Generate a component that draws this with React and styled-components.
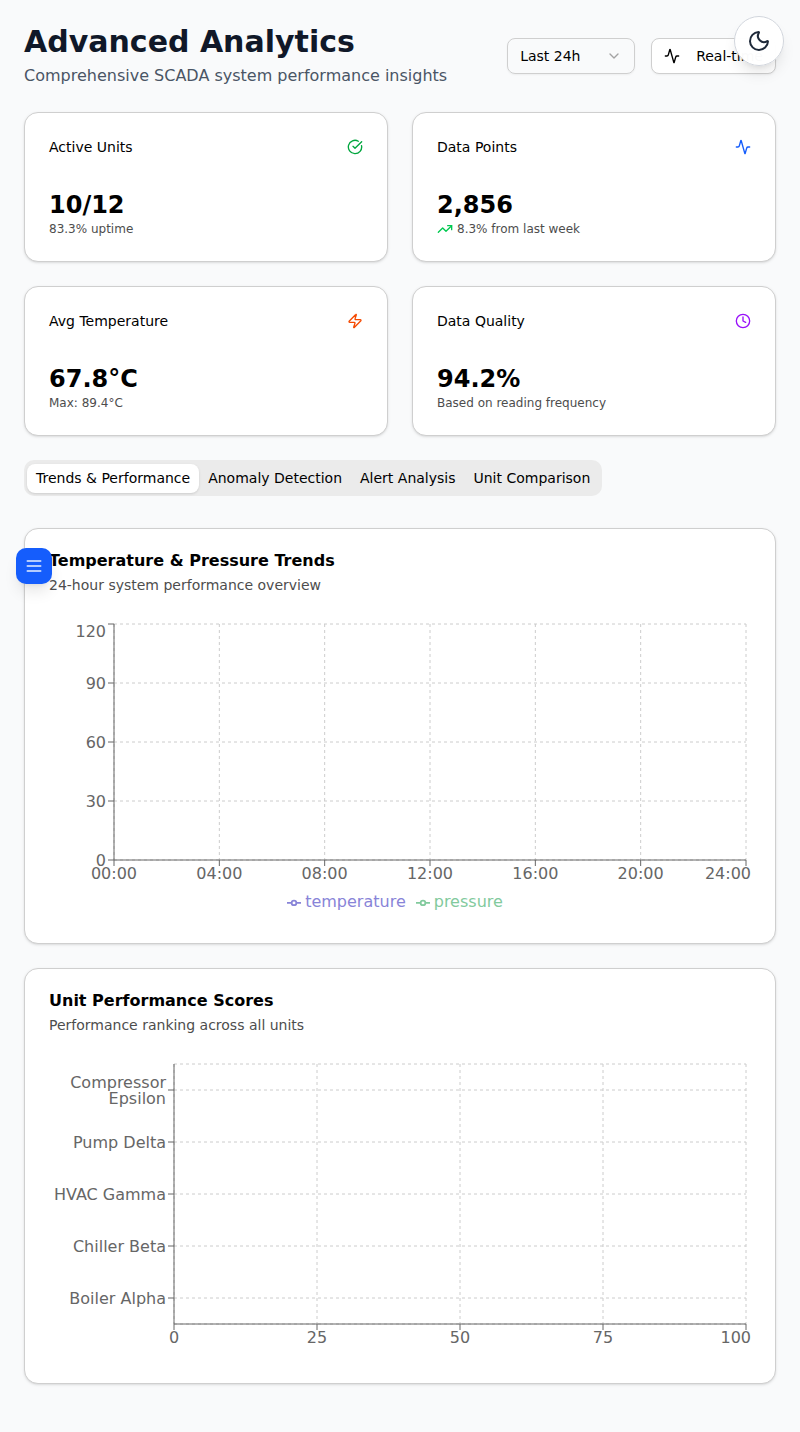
import React, { useLayoutEffect, useRef, useState } from "react";
import styled, { createGlobalStyle } from "styled-components";
import {
  Activity,
  ChevronDown,
  CircleCheckBig,
  Clock,
  Moon,
  TrendingUp,
  Zap,
} from "lucide-react";

const GlobalStyle = createGlobalStyle`
  *, *::before, *::after { box-sizing: border-box; }
  body {
    margin: 0;
    background: #f9fafb;
    color: #000;
    font-family: "DejaVu Sans", sans-serif;
    font-size: 16px;
    line-height: 24px;
  }
  h1, h2, p { margin: 0; }
  button, select { font: inherit; color: inherit; }
  svg { display: block; flex-shrink: 0; }
`;

const Page = styled.main`
  min-height: 100vh;
  padding: 24px 24px 48px;
  display: flex;
  flex-direction: column;
  gap: 24px;
`;

const Header = styled.header`
  display: flex;
  align-items: center;
  justify-content: space-between;
  gap: 16px;
`;

const Heading = styled.div`
  display: flex;
  flex-direction: column;
  gap: 4px;
`;

const Title = styled.h1`
  font-size: 30px;
  line-height: 36px;
  font-weight: 700;
  color: #101828;
`;

const Subtitle = styled.p`
  color: #4a5565;
`;

const Controls = styled.div`
  display: flex;
  gap: 16px;
`;

const SelectBox = styled.div`
  display: grid;
  align-items: center;
  width: 128px;

  & > * { grid-area: 1 / 1; }
  & > svg {
    justify-self: end;
    margin-right: 13px;
    color: #a3a3a3;
    pointer-events: none;
  }
`;

const Select = styled.select`
  appearance: none;
  width: 100%;
  height: 36px;
  padding: 0 32px 0 12px;
  border: 1px solid #cfcfcf;
  border-radius: 8px;
  background: transparent;
  font-size: 14px;
  line-height: 20px;
  box-shadow: 0 1px 2px rgba(0, 0, 0, 0.05);
`;

const OutlineButton = styled.button`
  display: flex;
  align-items: center;
  gap: 16px;
  height: 36px;
  padding: 0 12px;
  border: 1px solid #cfcfcf;
  border-radius: 8px;
  background: #fff;
  font-size: 14px;
  line-height: 20px;
  white-space: nowrap;
  box-shadow: 0 1px 2px rgba(0, 0, 0, 0.05);
`;

const ThemeToggle = styled.button`
  position: fixed;
  top: 16px;
  right: 16px;
  z-index: 2;
  display: grid;
  place-items: center;
  width: 50px;
  height: 50px;
  padding: 0;
  border: 1px solid #d1d5dc;
  border-radius: 50%;
  background: rgba(255, 255, 255, 0.98);
  color: #1e2939;
  box-shadow: 0 10px 15px -3px rgba(0, 0, 0, 0.1), 0 4px 6px -4px rgba(0, 0, 0, 0.1);
`;

const MenuButton = styled.button`
  position: fixed;
  top: 548px;
  left: 16px;
  z-index: 2;
  display: grid;
  place-items: center;
  width: 36px;
  height: 36px;
  padding: 0;
  border: 0;
  border-radius: 10px;
  background: #155dfc;
  color: rgba(255, 255, 255, 0.9);
  box-shadow: 0 10px 15px -3px rgba(0, 0, 0, 0.1), 0 4px 6px -4px rgba(0, 0, 0, 0.1);
`;

const StatGrid = styled.section`
  display: grid;
  grid-template-columns: repeat(2, minmax(0, 1fr));
  gap: 24px;
`;

const Card = styled.article`
  padding: 24px;
  border: 1px solid #cfcfcf;
  border-radius: 14px;
  background: #fff;
  box-shadow: 0 1px 3px rgba(0, 0, 0, 0.1), 0 1px 2px -1px rgba(0, 0, 0, 0.1);
`;

const StatHeader = styled.div`
  display: flex;
  align-items: center;
  justify-content: space-between;
  margin-bottom: 32px;
  color: ${(p) => p.$accent};
`;

const StatLabel = styled.h2`
  font-size: 14px;
  line-height: 20px;
  font-weight: 400;
  color: #000;
`;

const StatValue = styled.p`
  font-size: 24px;
  line-height: 32px;
  font-weight: 700;
`;

const StatNote = styled.p`
  display: flex;
  align-items: center;
  gap: 4px;
  font-size: 12px;
  line-height: 16px;
  color: #4d4d4d;

  & > svg { color: #00c950; }
`;

const TabList = styled.div`
  display: flex;
  align-items: center;
  align-self: flex-start;
  height: 36px;
  margin-bottom: 8px;
  padding: 3px;
  border-radius: 10px;
  background: #ebebeb;
`;

const Tab = styled.button`
  height: 29px;
  padding: 0 9px;
  border: 0;
  border-radius: 8px;
  background: ${(p) => (p.$active ? "#fff" : "transparent")};
  box-shadow: ${(p) => (p.$active ? "0 1px 3px rgba(0, 0, 0, 0.1), 0 1px 2px -1px rgba(0, 0, 0, 0.1)" : "none")};
  font-size: 14px;
  line-height: 20px;
  white-space: nowrap;
`;

const ChartTitle = styled.h2`
  margin-bottom: 6px;
  font-size: 16px;
  line-height: 16px;
  font-weight: 700;
`;

const ChartNote = styled.p`
  margin-bottom: 24px;
  font-size: 14px;
  line-height: 20px;
  color: #4d4d4d;
`;

const ChartArea = styled.div`
  display: flex;
  flex-direction: column;
  height: 300px;
`;

const Plot = styled.svg`
  width: 100%;
  height: ${(p) => p.$height}px;

  .grid { stroke: #ccc; stroke-dasharray: 3 3; }
  .axis { stroke: #666; }
  text { fill: #666; font-size: 16px; }
`;

const Legend = styled.ul`
  display: flex;
  justify-content: center;
  gap: 10px;
  margin: 0;
  padding: 0 10px 0 0;
  list-style: none;
`;

const LegendItem = styled.li`
  display: flex;
  align-items: center;
  gap: 4px;
  color: ${(p) => p.$color};
`;

const STATS = [
  { label: "Active Units", value: "10/12", note: "83.3% uptime", Icon: CircleCheckBig, accent: "#00a63e" },
  { label: "Data Points", value: "2,856", note: "8.3% from last week", trend: true, Icon: Activity, accent: "#155dfc" },
  { label: "Avg Temperature", value: "67.8°C", note: "Max: 89.4°C", Icon: Zap, accent: "#f54900" },
  { label: "Data Quality", value: "94.2%", note: "Based on reading frequency", Icon: Clock, accent: "#9810fa" },
];

const TABS = ["Trends & Performance", "Anomaly Detection", "Alert Analysis", "Unit Comparison"];
const HOURS = ["00:00", "04:00", "08:00", "12:00", "16:00", "20:00", "24:00"];
const UNITS = ["Compressor Epsilon", "Pump Delta", "HVAC Gamma", "Chiller Beta", "Boiler Alpha"];
const SCORES = [0, 25, 50, 75, 100];
const LEVELS = [120, 90, 60, 30, 0];

function useWidth() {
  const ref = useRef(null);
  const [width, setWidth] = useState(702);
  useLayoutEffect(() => {
    const measure = () => setWidth(ref.current.getBoundingClientRect().width);
    measure();
    const observer = new ResizeObserver(measure);
    observer.observe(ref.current);
    return () => observer.disconnect();
  }, []);
  return [ref, width];
}

function Axes({ width, left, top, bottom, xLabels, rows, edges = [] }) {
  const right = width - 5;
  const xs = xLabels.map((_, i) => left + ((right - left) * i) / (xLabels.length - 1));
  return (
    <>
      {[...edges, ...rows.map((r) => r.y)].map((y) => (
        <line key={y} className="grid" x1={left} x2={right} y1={y} y2={y} />
      ))}
      {xs.map((x) => (
        <line key={x} className="grid" x1={x} x2={x} y1={top} y2={bottom} />
      ))}
      <line className="axis" x1={left} x2={right} y1={bottom} y2={bottom} />
      <line className="axis" x1={left} x2={left} y1={top} y2={bottom} />
      {xs.map((x, i) => {
        const last = i === xs.length - 1;
        return (
          <g key={x}>
            <line className="axis" x1={x} x2={x} y1={bottom} y2={bottom + 6} />
            <text x={last ? width : x} y={bottom + 19} textAnchor={last ? "end" : "middle"}>
              {xLabels[i]}
            </text>
          </g>
        );
      })}
      {rows.map(({ y, lines, labelY = y }) => (
        <g key={y}>
          <line className="axis" x1={left - 6} x2={left} y1={y} y2={y} />
          {lines.map((line, i) => (
            <text key={line} x={left - 8} y={labelY + 6 + 16 * i - 8 * (lines.length - 1)} textAnchor="end">
              {line}
            </text>
          ))}
        </g>
      ))}
    </>
  );
}

function TrendsChart() {
  const [ref, width] = useWidth();
  const rows = LEVELS.map((level, i) => ({
    y: 5 + 59 * i,
    labelY: Math.max(12, 5 + 59 * i),
    lines: [String(level)],
  }));
  return (
    <Plot ref={ref} $height={271} role="img" aria-label="Temperature and pressure over 24 hours">
      <Axes width={width} left={65} top={5} bottom={241} xLabels={HOURS} rows={rows} />
    </Plot>
  );
}

function ScoresChart() {
  const [ref, width] = useWidth();
  const rows = UNITS.map((unit, i) => ({
    y: 31 + 52 * i,
    lines: unit.length > 12 ? unit.split(" ") : [unit],
  }));
  return (
    <Plot ref={ref} $height={300} role="img" aria-label="Performance score by unit">
      <Axes width={width} left={125} top={5} bottom={265} xLabels={SCORES} rows={rows} edges={[5, 265]} />
    </Plot>
  );
}

function LegendMark() {
  return (
    <svg width="14" height="14" viewBox="0 0 32 32" fill="none" stroke="currentColor" strokeWidth="4" aria-hidden="true">
      <path d="M0 18h10.667A5.333 5.333 0 1 1 21.333 18H32M21.333 18A5.333 5.333 0 1 1 10.667 18" />
    </svg>
  );
}

function MenuIcon() {
  return (
    <svg width="20" height="20" viewBox="0 0 24 24" fill="none" stroke="currentColor" strokeWidth="2" strokeLinecap="round" aria-hidden="true">
      <path d="M4 6h16M4 12h16M4 18h16" />
    </svg>
  );
}

export default function App() {
  const [tab, setTab] = useState(TABS[0]);
  return (
    <>
      <GlobalStyle />
      <ThemeToggle type="button" aria-label="Switch to dark mode">
        <Moon size={24} />
      </ThemeToggle>
      <MenuButton type="button" aria-label="Open menu">
        <MenuIcon />
      </MenuButton>
      <Page>
        <Header>
          <Heading>
            <Title>Advanced Analytics</Title>
            <Subtitle>Comprehensive SCADA system performance insights</Subtitle>
          </Heading>
          <Controls>
            <SelectBox>
              <Select aria-label="Time range" defaultValue="24h">
                <option value="24h">Last 24h</option>
              </Select>
              <ChevronDown size={16} />
            </SelectBox>
            <OutlineButton type="button">
              <Activity size={16} />
              Real-time
            </OutlineButton>
          </Controls>
        </Header>

        <StatGrid>
          {STATS.map(({ label, value, note, trend, Icon, accent }) => (
            <Card key={label}>
              <StatHeader $accent={accent}>
                <StatLabel>{label}</StatLabel>
                <Icon size={16} />
              </StatHeader>
              <StatValue>{value}</StatValue>
              <StatNote>
                {trend && <TrendingUp size={16} />}
                {note}
              </StatNote>
            </Card>
          ))}
        </StatGrid>

        <TabList role="tablist">
          {TABS.map((name) => (
            <Tab
              key={name}
              type="button"
              role="tab"
              aria-selected={tab === name}
              $active={tab === name}
              onClick={() => setTab(name)}
            >
              {name}
            </Tab>
          ))}
        </TabList>

        <Card>
          <ChartTitle>Temperature &amp; Pressure Trends</ChartTitle>
          <ChartNote>24-hour system performance overview</ChartNote>
          <ChartArea>
            <TrendsChart />
            <Legend>
              <LegendItem $color="#8884d8">
                <LegendMark />
                temperature
              </LegendItem>
              <LegendItem $color="#82ca9d">
                <LegendMark />
                pressure
              </LegendItem>
            </Legend>
          </ChartArea>
        </Card>

        <Card>
          <ChartTitle>Unit Performance Scores</ChartTitle>
          <ChartNote>Performance ranking across all units</ChartNote>
          <ChartArea>
            <ScoresChart />
          </ChartArea>
        </Card>
      </Page>
    </>
  );
}
